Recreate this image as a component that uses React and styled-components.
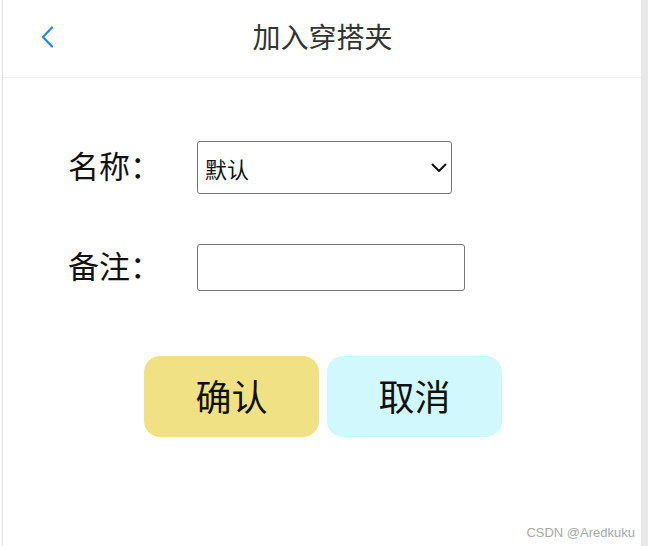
import styled, { createGlobalStyle } from 'styled-components'
import { useState } from 'react'

const GlobalStyle = createGlobalStyle`
  html, body {
    margin: 0;
    padding: 0;
    background: #e8e8e8;
    font-family: "Noto Sans CJK SC", "Noto Sans", sans-serif;
  }
`

function App() {
  const [nombre, setNombre] = useState('默认')
  const [nota, setNota] = useState('')

  return (
    <>
      <GlobalStyle />
      <Frame>
        <Page>
          <Header>
            <Back aria-label="返回">
              <svg width="14" height="22" viewBox="0 0 14 22">
                <path d="M12 1.5 L3 11 L12 20.5" fill="none" stroke="#2386ea" strokeWidth="2.2" strokeLinecap="round" strokeLinejoin="round" />
              </svg>
            </Back>
            <Title>加入穿搭夹</Title>
          </Header>

          <Form onSubmit={(e) => e.preventDefault()}>
            <Row>
              <Label>名称：</Label>
              <SelectWrap>
                <Select value={nombre} onChange={(e) => setNombre(e.target.value)}>
                  <option>默认</option>
                </Select>
                <Chevron width="16" height="10" viewBox="0 0 16 10">
                  <path d="M1.5 1.5 L8 8 L14.5 1.5" fill="none" stroke="#111" strokeWidth="2" strokeLinecap="round" strokeLinejoin="round" />
                </Chevron>
              </SelectWrap>
            </Row>
            <Row $top={50}>
              <Label>备注：</Label>
              <Input type="text" value={nota} onChange={(e) => setNota(e.target.value)} />
            </Row>

            <Buttons>
              <Boton type="submit" $bg="#f0e284">确认</Boton>
              <Boton type="button" $bg="#d1f8fd">取消</Boton>
            </Buttons>
          </Form>

          <Marca>CSDN @Aredkuku</Marca>
        </Page>
      </Frame>
    </>
  )
}

export default App

const Frame = styled.div`
  width: 639px;
  height: 546px;
  padding-left: 2px;
  background: #fff;
`

const Page = styled.div`
  position: relative;
  height: 546px;
  border-left: 1px solid #dedede;
  background: #fff;
`

const Header = styled.header`
  position: relative;
  height: 77px;
  border-bottom: 1px solid #f0f0f0;
  display: flex;
  align-items: center;
  justify-content: center;
`

const Back = styled.button`
  position: absolute;
  left: 37px;
  top: 26px;
  padding: 0;
  border: none;
  background: none;
  display: flex;
  cursor: pointer;
`

const Title = styled.h1`
  margin: 0;
  font-size: 28px;
  font-weight: 400;
  line-height: 1;
  color: #333;
  margin-left: 1px;
  margin-top: -6px;
`

const Form = styled.form`
  padding: 63px 0 0 65px;
`

const Row = styled.div`
  display: flex;
  align-items: center;
  margin-top: ${(p) => (p.$top || 0)}px;
`

const Label = styled.label`
  width: 129px;
  font-size: 31px;
  line-height: 1;
  color: #111;
  margin-top: -6px;
`

const SelectWrap = styled.div`
  position: relative;
  display: flex;
`

const Select = styled.select`
  appearance: none;
  width: 255px;
  height: 53px;
  padding: 0 7px;
  border: 1px solid #767676;
  border-radius: 3px;
  background: #fff;
  font-family: "Noto Sans CJK SC", sans-serif;
  font-size: 22px;
  color: #111;
  outline: none;
`

const Chevron = styled.svg`
  position: absolute;
  right: 5px;
  top: 22px;
  pointer-events: none;
`

const Input = styled.input`
  width: 268px;
  height: 47px;
  box-sizing: border-box;
  padding: 0 8px;
  border: 1px solid #767676;
  border-radius: 3px;
  font-size: 20px;
  outline: none;
`

const Buttons = styled.div`
  display: flex;
  gap: 8px;
  margin: 65px 0 0 76px;
`

const Boton = styled.button`
  width: 175px;
  height: 81px;
  border: none;
  border-radius: 16px;
  background: ${(p) => p.$bg};
  font-family: "Noto Sans CJK SC", sans-serif;
  font-size: 36px;
  line-height: 1;
  color: #111;
  cursor: pointer;
  padding: 0 0 4px;
`

const Marca = styled.span`
  position: absolute;
  right: 6px;
  bottom: 6px;
  font-family: "Liberation Sans", Arial, sans-serif;
  font-size: 13px;
  color: #a8a8a8;
`
